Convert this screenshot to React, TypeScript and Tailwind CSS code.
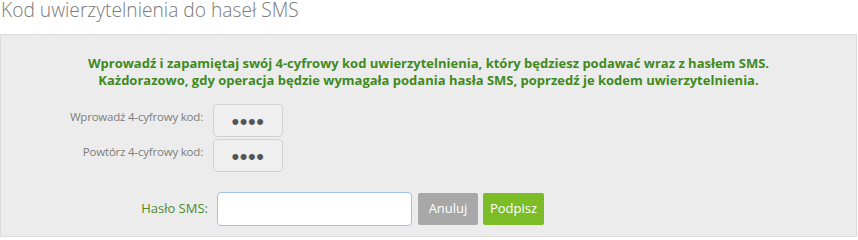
export default function App() {
  return (
    <div className="w-[858px] h-[239px] overflow-hidden bg-white font-['Open_Sans',sans-serif]">
      {/* Title */}
      <h1 className="h-[34px] pl-[1px] text-[19.2px] font-light leading-[20px] text-[#7a7a7a]">
        Kod uwierzytelnienia do haseł SMS
      </h1>

      {/* Panel */}
      <div className="w-[857px] h-[203px] border border-[#dcdcdc] bg-[#ececec] pt-[20px]">
        <div className="text-center text-[13px] font-bold leading-[17px] text-[#3f8a1e]">
          <p>Wprowadź i zapamiętaj swój 4-cyfrowy kod uwierzytelnienia, który będziesz podawać wraz z hasłem SMS.</p>
          <p>Każdorazowo, gdy operacja będzie wymagała podania hasła SMS, poprzedź je kodem uwierzytelnienia.</p>
        </div>

        <div className="mt-[15px] flex flex-col gap-[2px]">
          <CodeRow label="Wprowadź 4-cyfrowy kod:" />
          <CodeRow label="Powtórz 4-cyfrowy kod:" />
        </div>

        <div className="mt-[20px] flex items-center">
          <label className="w-[216px] pr-[9px] text-right text-[13px] text-[#4c8a2c]">Hasło SMS:</label>
          <input
            type="text"
            className="w-[195px] h-[34px] rounded-[4px] border border-[#9fc3e6] bg-white px-2 outline-none"
          />
          <button className="ml-[6px] h-[32px] w-[60px] rounded-[2px] bg-[#a8a8a8] text-[13px] text-white">
            Anuluj
          </button>
          <button className="ml-[5px] h-[32px] w-[61px] rounded-[2px] bg-[#7cbd27] text-[13px] text-white">
            Podpisz
          </button>
        </div>
      </div>
    </div>
  );
}

function CodeRow({ label }: { label: string }) {
  return (
    <div className="flex items-start">
      <span className="w-[202px] pt-[5px] text-right text-[11.5px] leading-[16px] text-[#7d7d7d] tracking-[-0.2px]">
        {label}
      </span>
      <div className="ml-[10px] flex h-[33px] w-[70px] items-center justify-center rounded-[4px] border border-[#d2d2d2] bg-[#efefef] pt-[2px] font-['Liberation_Sans',sans-serif] text-[22px] leading-none tracking-[0.5px] text-[#555]">
        ••••
      </div>
    </div>
  );
}
